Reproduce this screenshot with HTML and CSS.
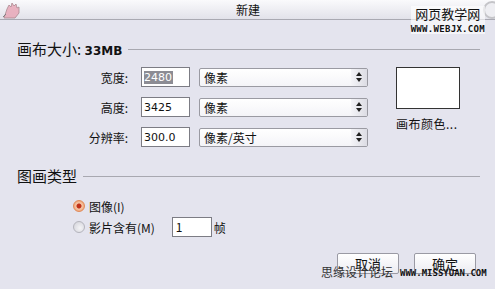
FILE: index.html
```html
<!DOCTYPE html>
<html lang="zh-CN">
<head>
    <meta charset="UTF-8">
    <meta name="viewport" content="width=device-width, initial-scale=1.0">
    <title>新建</title>
    <link rel="stylesheet" href="styles.css">
</head>
<body>
    <div class="dialog">
        <header class="titlebar">
            <svg class="app-icon" width="22" height="18" viewBox="0 0 22 18">
                <path d="M3 17 L6 8 L8 4 L10 6 L11 2 L13 5 L15 3 L16 7 L18 6 L18 12 L14 17 Z" fill="#e8a8b8" stroke="#a07880" stroke-width="0.8"/>
                <path d="M2 16 L5 13" stroke="#707070" stroke-width="1"/>
            </svg>
            <h1 class="title">新建</h1>
            <span class="close-btn"></span>
        </header>

        <main class="content">
            <div class="group-head">
                <span class="group-title">画布大小: <b class="size-value">33MB</b></span>
                <span class="group-rule"></span>
            </div>

            <div class="size-body">
                <div class="fields">
                    <div class="field-row">
                        <label class="field-label" for="width">宽度:</label>
                        <span class="num-input" id="width"><span class="selected">2480</span></span>
                        <span class="select">像素<span class="stepper"><svg width="8" height="12" viewBox="0 0 8 12"><path d="M4 1 L7 5 L1 5 Z M1 7 L7 7 L4 11 Z" fill="#222"/></svg></span></span>
                    </div>
                    <div class="field-row">
                        <label class="field-label" for="height">高度:</label>
                        <span class="num-input" id="height">3425</span>
                        <span class="select">像素<span class="stepper"><svg width="8" height="12" viewBox="0 0 8 12"><path d="M4 1 L7 5 L1 5 Z M1 7 L7 7 L4 11 Z" fill="#222"/></svg></span></span>
                    </div>
                    <div class="field-row">
                        <label class="field-label" for="res">分辨率:</label>
                        <span class="num-input" id="res">300.0</span>
                        <span class="select">像素/英寸<span class="stepper"><svg width="8" height="12" viewBox="0 0 8 12"><path d="M4 1 L7 5 L1 5 Z M1 7 L7 7 L4 11 Z" fill="#222"/></svg></span></span>
                    </div>
                </div>
                <div class="canvas-color">
                    <div class="swatch"></div>
                    <div class="swatch-label">画布颜色...</div>
                </div>
            </div>

            <div class="group-head type-head">
                <span class="group-title">图画类型</span>
                <span class="group-rule"></span>
            </div>

            <div class="radios">
                <div class="radio-row">
                    <span class="radio checked"></span>
                    <span>图像(I)</span>
                </div>
                <div class="radio-row">
                    <span class="radio"></span>
                    <span>影片含有(M)</span>
                    <span class="frame-input">1</span>
                    <span>帧</span>
                </div>
            </div>

            <div class="actions">
                <button class="btn">取消</button>
                <button class="btn">确定</button>
            </div>
        </main>

        <div class="mark mark-top">
            <div class="mark-cn">网页教学网</div>
            <div class="mark-en">WWW.WEBJX.COM</div>
        </div>
        <div class="mark mark-bottom">
            <span class="mark-cn2">思缘设计论坛</span>
            <span class="mark-en2">WWW.MISSYUAN.COM</span>
        </div>
    </div>
</body>
</html>
```

FILE: styles.css
```css
body {
    margin: 0;
    padding: 0;
    background-color: #e4e4ee;
    font-family: "Noto Sans CJK SC", "DejaVu Sans", sans-serif;
    font-size: 12px;
    color: #111;
}

.dialog {
    position: relative;
    width: 495px;
    height: 289px;
    overflow: hidden;
}

.titlebar {
    height: 19px;
    display: flex;
    align-items: center;
    background: linear-gradient(#fafafc, #e2e2ea);
    border-bottom: 1px solid #a9a9b2;
}

.app-icon {
    margin-left: 1px;
    opacity: 0.85;
}

.title {
    flex: 1;
    margin: 0;
    font-size: 12px;
    font-weight: normal;
    text-align: center;
    padding-right: 10px;
}

.close-btn {
    width: 14px;
    height: 14px;
    margin-right: -6px;
    border-radius: 50%;
    border: 2px solid #c4c4c8;
    background: #eeeef2;
}

.content {
    padding: 0 15px 0 17px;
}

.group-head {
    display: flex;
    align-items: center;
    margin-top: 18px;
    height: 20px;
}

.group-title {
    font-size: 15px;
    white-space: nowrap;
}

.size-value {
    font-family: "DejaVu Sans", sans-serif;
    font-size: 12px;
}

.group-rule {
    flex: 1;
    margin-left: 6px;
    margin-top: 2px;
    border-top: 1px solid #a8a8b0;
}

.size-body {
    display: flex;
    margin-top: 9px;
}

.field-row {
    display: flex;
    align-items: center;
    height: 20px;
    margin-bottom: 10px;
}

.field-label {
    width: 111px;
    text-align: right;
}

.num-input {
    box-sizing: border-box;
    width: 49px;
    height: 20px;
    margin-left: 13px;
    padding: 2px 2px 0;
    background: #fff;
    border: 1px solid #7c7c84;
    font-family: "DejaVu Sans", sans-serif;
    font-size: 11px;
    line-height: 15px;
}

.selected {
    background: #8c8c94;
    color: #fff;
    padding-right: 1px;
}

.select {
    box-sizing: border-box;
    position: relative;
    width: 169px;
    height: 19px;
    margin-left: 9px;
    padding: 1px 4px;
    background: linear-gradient(#ffffff, #f4f4f8);
    border: 1px solid #9a9aa2;
    border-radius: 2px;
    line-height: 16px;
}

.stepper {
    position: absolute;
    right: 0;
    top: 0;
    width: 16px;
    height: 17px;
    display: flex;
    align-items: center;
    justify-content: center;
    background: linear-gradient(90deg, #f4f4f8, #dcdce4);
}

.canvas-color {
    margin-left: 28px;
}

.swatch {
    box-sizing: border-box;
    width: 64px;
    height: 42px;
    background: #fff;
    border: 1px solid #333;
}

.swatch-label {
    margin-top: 6px;
    letter-spacing: 0.5px;
}

.type-head {
    margin-top: 8px;
}

.radios {
    margin-top: 11px;
    padding-left: 56px;
}

.radio-row {
    display: flex;
    align-items: center;
    gap: 4px;
    height: 20px;
    margin-bottom: 1px;
}

.radio {
    box-sizing: border-box;
    width: 12px;
    height: 12px;
    border-radius: 50%;
    border: 1px solid #b4b4bc;
    background: radial-gradient(circle at 60% 60%, #f4f4f6, #d0d0d8);
}

.radio.checked {
    border-color: #e08a5a;
    background: radial-gradient(circle, #c03018 2px, #f6c8a8 3px, #ee9a68 6px);
}

.frame-input {
    box-sizing: border-box;
    width: 40px;
    height: 20px;
    margin-left: 13px;
    margin-right: -2px;
    padding: 1px 3px;
    background: #fff;
    border: 1px solid #7c7c84;
    line-height: 16px;
}

.actions {
    display: flex;
    justify-content: flex-end;
    gap: 15px;
    margin-top: 16px;
    padding-right: 4px;
}

.btn {
    width: 62px;
    height: 21px;
    padding: 0;
    font-family: inherit;
    font-size: 13px;
    color: #111;
    background: linear-gradient(#ffffff, #ececf2);
    border: 1px solid #9a9aa4;
    border-radius: 2px;
}

.mark {
    position: absolute;
    color: #111;
}

.mark-top {
    top: 6px;
    right: 10px;
    text-align: center;
    background: rgba(255, 255, 255, 0.6);
}

.mark-cn {
    font-size: 13px;
    line-height: 16px;
}

.mark-en {
    margin-top: 2px;
    font-family: "DejaVu Sans Mono", monospace;
    font-size: 9px;
    font-weight: bold;
    line-height: 10px;
    letter-spacing: 0.3px;
}

.mark-bottom {
    top: 264px;
    left: 321px;
    white-space: nowrap;
    display: flex;
    align-items: flex-end;
    gap: 7px;
}

.mark-cn2 {
    font-size: 12px;
    line-height: 15px;
    color: #333;
}

.mark-en2 {
    font-family: "DejaVu Sans Mono", monospace;
    font-size: 9px;
    font-weight: bold;
    line-height: 12px;
}
```
